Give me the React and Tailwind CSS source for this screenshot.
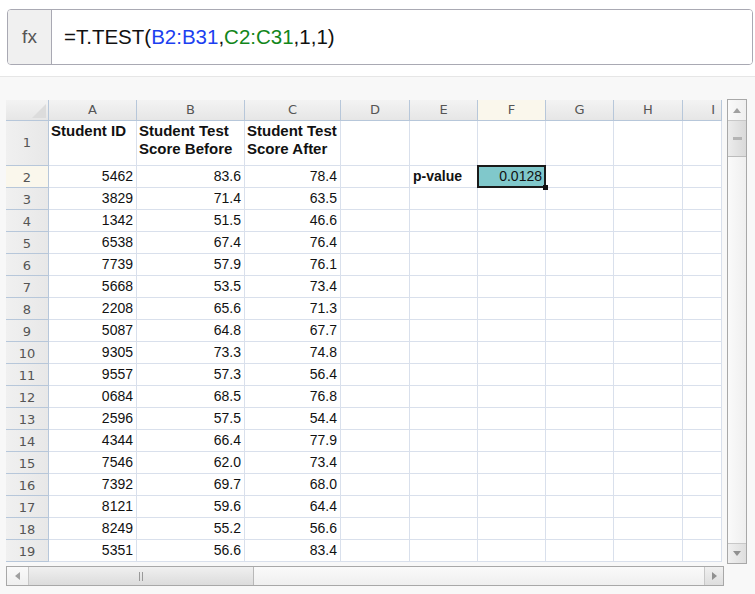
import React from 'react'

const cols = ['A', 'B', 'C', 'D', 'E', 'F', 'G', 'H', 'I']

const data = [
  ['5462', '83.6', '78.4'],
  ['3829', '71.4', '63.5'],
  ['1342', '51.5', '46.6'],
  ['6538', '67.4', '76.4'],
  ['7739', '57.9', '76.1'],
  ['5668', '53.5', '73.4'],
  ['2208', '65.6', '71.3'],
  ['5087', '64.8', '67.7'],
  ['9305', '73.3', '74.8'],
  ['9557', '57.3', '56.4'],
  ['0684', '68.5', '76.8'],
  ['2596', '57.5', '54.4'],
  ['4344', '66.4', '77.9'],
  ['7546', '62.0', '73.4'],
  ['7392', '69.7', '68.0'],
  ['8121', '59.6', '64.4'],
  ['8249', '55.2', '56.6'],
  ['5351', '56.6', '83.4'],
]

const gridCols = 'grid grid-cols-[43px_88px_108px_96px_69px_68px_68px_68px_69px_39px]'
const hdr = 'border-r border-b border-[#b7c7da] bg-gradient-to-b from-[#f3f3f3] to-[#e6e6e6] text-[#555] text-[13px] flex items-center justify-center'
const cell = 'border-r border-b border-[#d9e0ec] bg-white text-[14px] text-[#111] px-[3px] flex items-center'
const titleCell = 'border-r border-b border-[#d9e0ec] bg-white text-[15px] text-[#111] px-[2px] pt-[1px] font-bold leading-[18px]'

function RowHeader({ n, active, tall }) {
  return (
    <div className={`border-r border-b border-[#b7c7da] text-[#555] text-[13px] flex items-center justify-center ${active ? 'bg-[#faf7ec]' : 'bg-gradient-to-r from-[#f0f0f0] to-[#e8e8e8]'} ${tall ? 'h-[45px]' : 'h-[22px] pt-[2px]'}`}>
      {n}
    </div>
  )
}

export default function App() {
  return (
    <div className="w-[755px] h-[594px] bg-[#f8f8f8] overflow-hidden" style={{ fontFamily: '"Liberation Sans", Arial, sans-serif' }}>
      {/* Formula bar */}
      <div className="h-[77px] bg-white pt-[9px] border-b border-[#e6e6e6]">
        <div className="ml-[7px] w-[746px] h-[56px] flex border border-[#a9a9b3] rounded-[4px] overflow-hidden">
          <div className="w-[44px] bg-[#f0f0f0] border-r border-[#a9a9b3] flex items-center justify-center text-[19px] text-[#555]">
            fx
          </div>
          <div className="flex-1 bg-white flex items-center pl-[12px] text-[20.5px] text-[#111]">
            <span>=T.TEST(</span>
            <span className="text-[#1c3ff0]">B2:B31</span>
            <span>,</span>
            <span className="text-[#12861a]">C2:C31</span>
            <span>,1,1)</span>
          </div>
        </div>
      </div>

      <div className="flex pt-[23px] pl-[6px]">
        <div className="w-[718px]">
          {/* Spreadsheet grid */}
          <div className="w-[716px]">
            <div className={`${gridCols} h-[21px]`} style={{ fontFamily: '"DejaVu Sans", Verdana, sans-serif' }}>
              <div className="border-r border-b border-[#b7c7da] bg-gradient-to-b from-[#f3f3f3] to-[#e6e6e6] relative">
                <svg className="absolute right-[2px] bottom-[2px]" width="14" height="14" viewBox="0 0 14 14">
                  <polygon points="14,0 14,14 0,14" fill="#dcdcdc" />
                </svg>
              </div>
              {cols.map((c) => (
                <div key={c} className={`${hdr} ${c === 'F' ? '!bg-none bg-[#faf7ec]' : ''} ${c === 'I' ? 'justify-end pr-[6px]' : ''}`}>
                  {c}
                </div>
              ))}
            </div>

            {/* Row 1 */}
            <div className={gridCols}>
              <div style={{ fontFamily: '"DejaVu Sans", Verdana, sans-serif' }}>
                <RowHeader n="1" tall />
              </div>
              <div className={titleCell}>Student ID</div>
              <div className={titleCell}>Student Test Score Before</div>
              <div className={titleCell}>Student Test Score After</div>
              {[0, 1, 2, 3, 4, 5].map((i) => (
                <div key={i} className={cell} />
              ))}
            </div>

            {data.map((r, idx) => {
              const n = idx + 2
              return (
                <div key={n} className={gridCols}>
                  <div style={{ fontFamily: '"DejaVu Sans", Verdana, sans-serif' }}>
                    <RowHeader n={n} active={n === 2} />
                  </div>
                  {r.map((v, j) => (
                    <div key={j} className={`${cell} justify-end`}>{v}</div>
                  ))}
                  <div className={cell} />
                  <div className={`${cell} font-bold`}>{n === 2 ? 'p-value' : ''}</div>
                  {n === 2 ? (
                    <div className="border-r border-b border-[#d9e0ec] bg-white relative">
                      <div className="absolute -left-px -top-px right-[-1px] bottom-[-1px] bg-[#80c8cb] border-2 border-[#1a1a1a] flex items-center justify-end pr-[2px] text-[14px] text-[#111]">
                        0.0128
                      </div>
                      <div className="absolute right-[-3px] bottom-[-3px] w-[5px] h-[5px] bg-[#111]" />
                    </div>
                  ) : (
                    <div className={cell} />
                  )}
                  <div className={cell} />
                  <div className={cell} />
                  <div className={cell} />
                </div>
              )
            })}
          </div>

          {/* Horizontal scrollbar */}
          <div className="mt-[4px] w-[718px] h-[20px] flex border border-[#a8a8a8] bg-gradient-to-b from-[#fafafa] to-[#efefef]">
            <div className="w-[22px] flex items-center justify-center border-r border-[#c8c8c8]">
              <svg width="5" height="8" viewBox="0 0 5 8"><polygon points="5,0 5,8 0,4" fill="#a0a0a0" /></svg>
            </div>
            <div className="w-[225px] border-r border-[#b8b8b8] bg-gradient-to-b from-[#f0f0f0] to-[#dcdcdc] flex items-center justify-center">
              <div className="flex gap-[2px]">
                <div className="w-px h-[9px] bg-[#9a9a9a]" />
                <div className="w-px h-[9px] bg-[#9a9a9a]" />
              </div>
            </div>
            <div className="flex-1" />
            <div className="w-[19px] flex items-center justify-center border-l border-[#c8c8c8] bg-gradient-to-b from-[#f0f0f0] to-[#dedede]">
              <svg width="5" height="8" viewBox="0 0 5 8"><polygon points="0,0 0,8 5,4" fill="#909090" /></svg>
            </div>
          </div>
        </div>

        {/* Vertical scrollbar */}
        <div className="ml-[3px] -mt-px w-[20px] h-[465px] flex flex-col border border-[#a8a8a8] bg-gradient-to-r from-[#fafafa] to-[#efefef]">
          <div className="h-[21px] flex items-center justify-center border-b border-[#c8c8c8]">
            <svg width="8" height="5" viewBox="0 0 8 5"><polygon points="0,5 8,5 4,0" fill="#a0a0a0" /></svg>
          </div>
          <div className="h-[36px] bg-gradient-to-r from-[#ececec] to-[#d9d9d9] border-b border-[#bcbcbc] flex items-center justify-center">
            <div className="w-[9px] h-[3px] bg-[#b4b4b4]" />
          </div>
          <div className="flex-1" />
          <div className="h-[20px] flex items-center justify-center border-t border-[#c8c8c8] bg-gradient-to-r from-[#f0f0f0] to-[#dedede]">
            <svg width="8" height="5" viewBox="0 0 8 5"><polygon points="0,0 8,0 4,5" fill="#909090" /></svg>
          </div>
        </div>
      </div>
    </div>
  )
}
